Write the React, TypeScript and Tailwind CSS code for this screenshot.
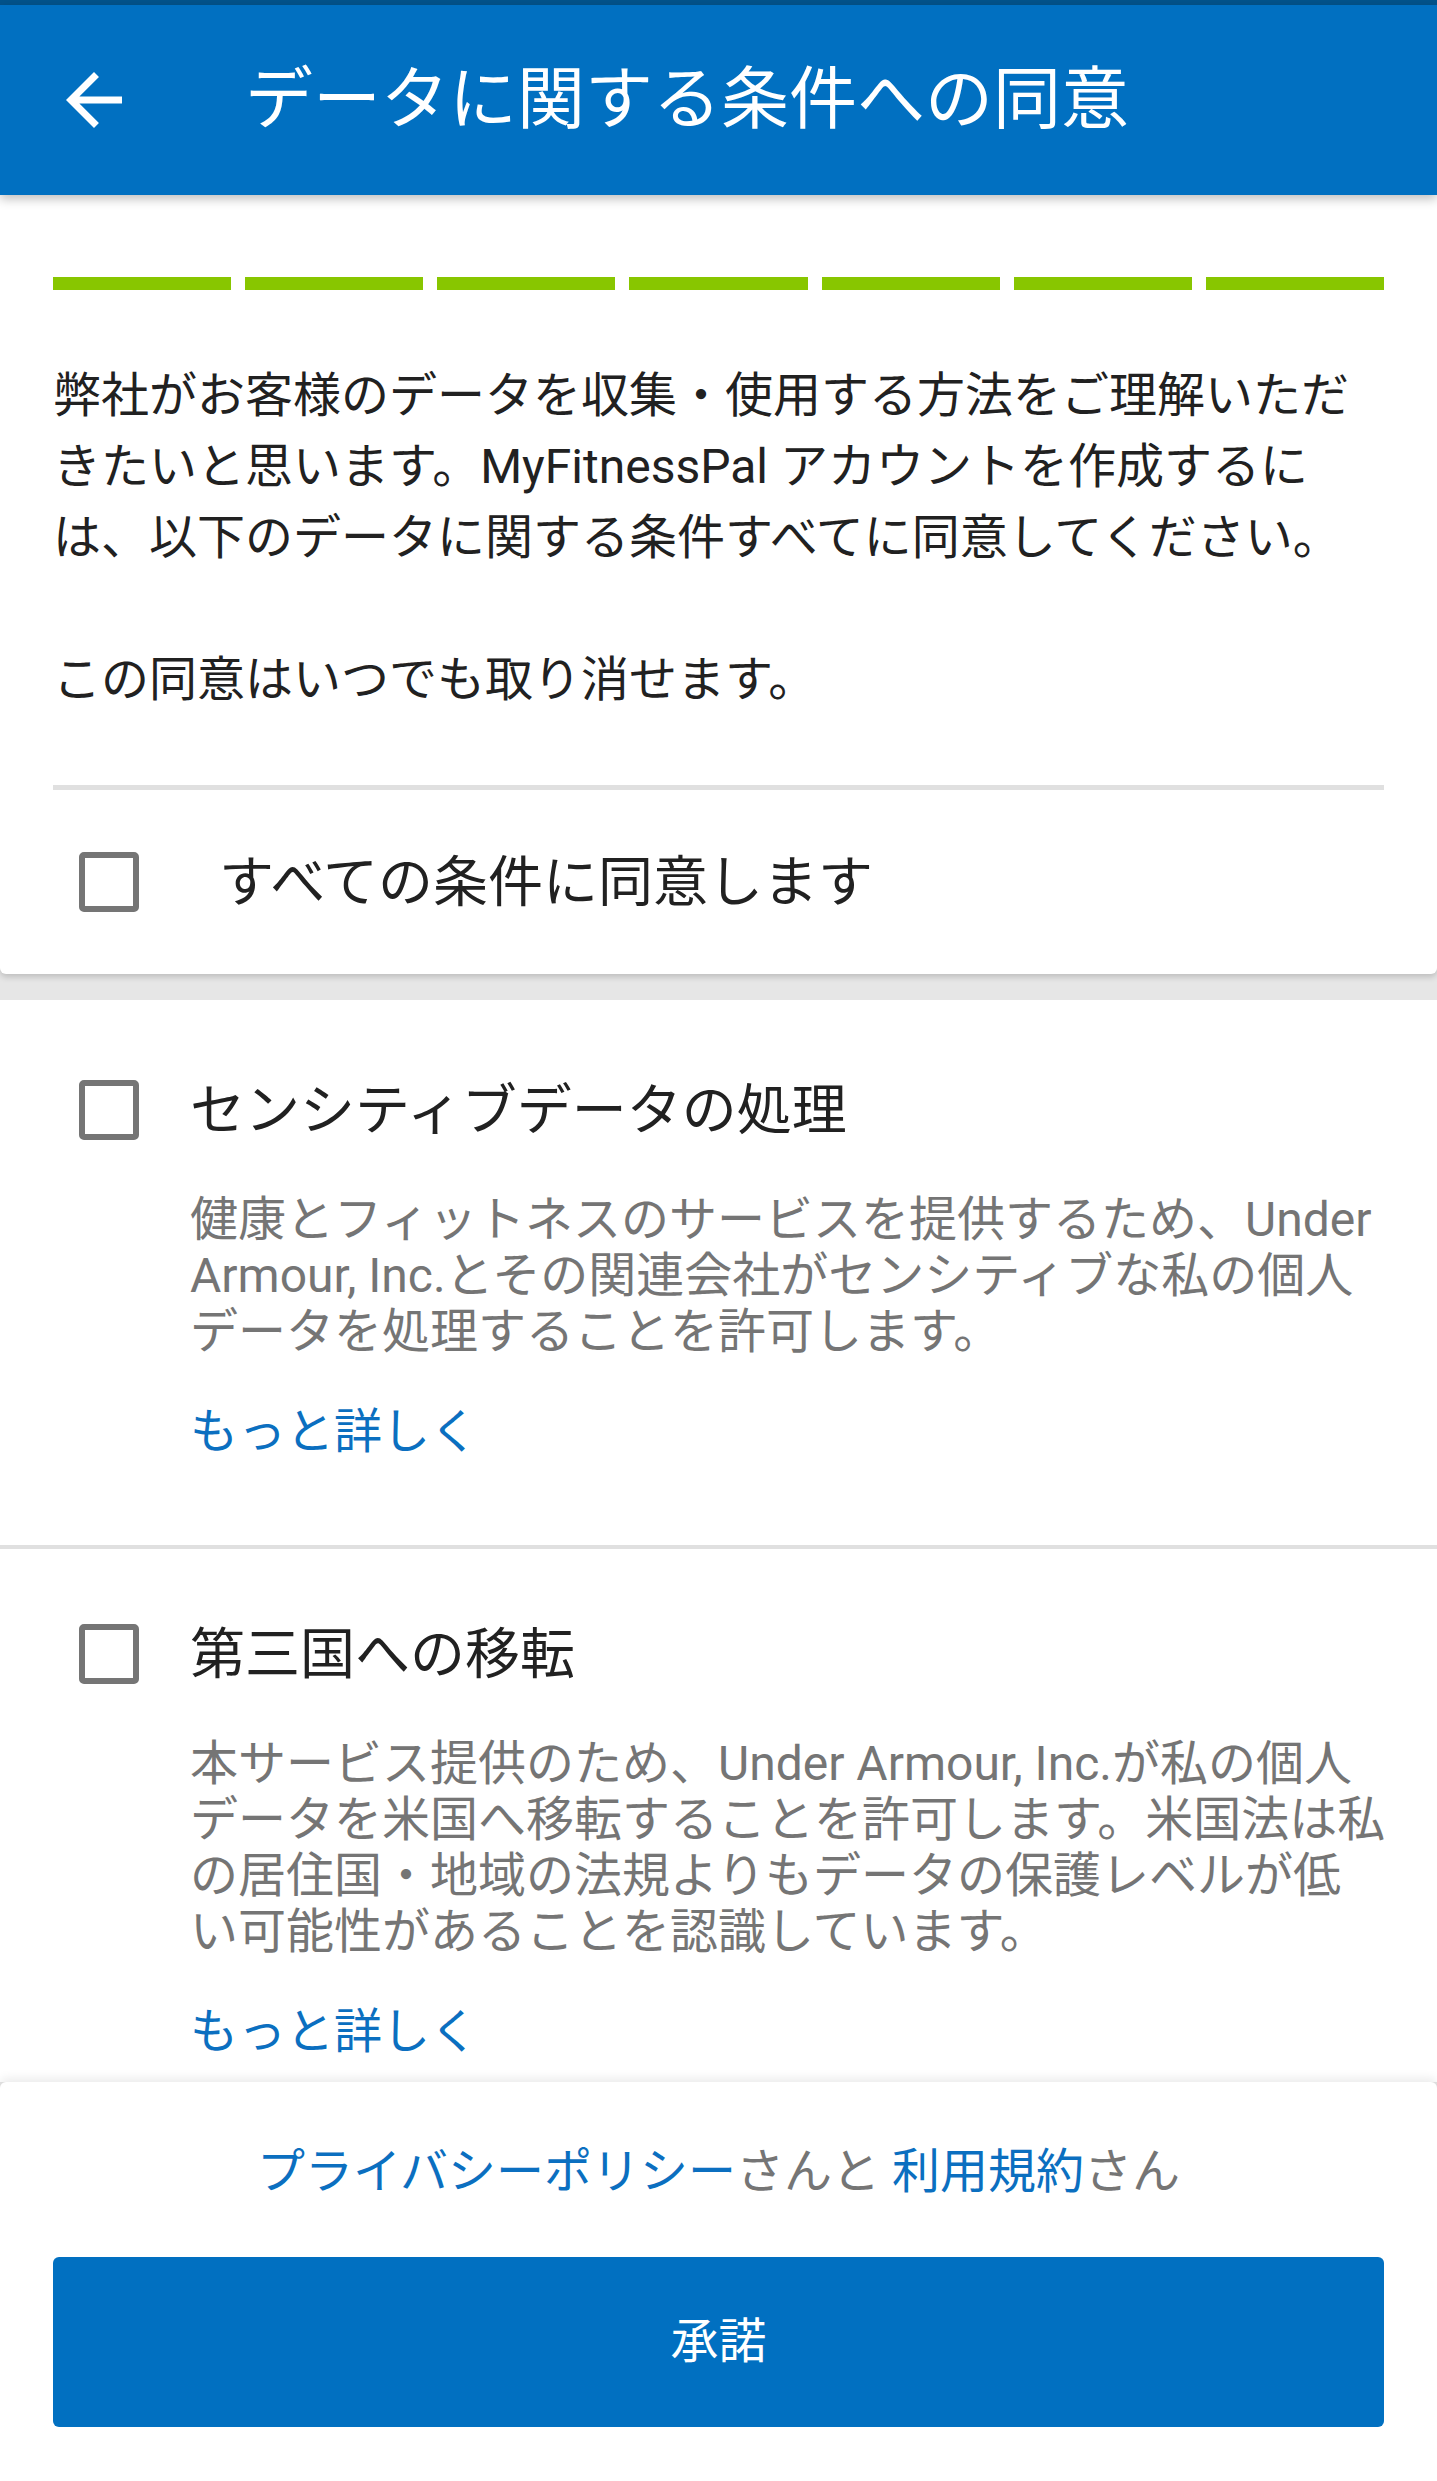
import React from 'react';

const sections = [
  {
    title: 'センシティブデータの処理',
    lines: [
      '健康とフィットネスのサービスを提供するため、Under',
      'Armour, Inc.とその関連会社がセンシティブな私の個人',
      'データを処理することを許可します。',
    ],
    pt: 'pt-[80px]',
    pb: 'pb-[85px]',
  },
  {
    title: '第三国への移転',
    lines: [
      '本サービス提供のため、Under Armour, Inc.が私の個人',
      'データを米国へ移転することを許可します。米国法は私',
      'の居住国・地域の法規よりもデータの保護レベルが低',
      'い可能性があることを認識しています。',
    ],
    pt: 'pt-[75px]',
    pb: 'pb-[85px]',
  },
];

function Checkbox() {
  return <div className="w-[60px] h-[60px] shrink-0 rounded-[5px] border-[6px] border-[#757575] bg-white" />;
}

export default function App() {
  return (
    <div className="w-[1437px] h-[2481px] flex flex-col bg-[#e6e6e6] overflow-hidden font-[Roboto,'Noto_Sans_CJK_JP',sans-serif]">
      <div className="h-[5px] bg-[#03538b] shrink-0" />
      <header className="relative z-20 h-[190px] shrink-0 bg-[#0170c1] flex items-center pl-[52px] shadow-[0_4px_10px_rgba(0,0,0,0.25)]">
        <svg width="84" height="84" viewBox="0 0 24 24" fill="white">
          <path d="M20 11H7.83l5.59-5.59L12 4l-8 8 8 8 1.41-1.41L7.83 13H20v-2z" />
        </svg>
        <h1 className="ml-[109px] text-[68px] leading-[80px] text-white font-normal whitespace-nowrap">データに関する条件への同意</h1>
      </header>

      <div className="relative z-10 shrink-0 bg-white rounded-b-[6px] shadow-[0_3px_6px_rgba(0,0,0,0.18)] px-[53px]">
        <div className="mt-[82px] flex gap-[14px]">
          {Array.from({ length: 7 }).map((_, i) => (
            <div key={i} className="flex-1 h-[13px] bg-[#88c600]" />
          ))}
        </div>
        <p className="mt-[70px] text-[48px] leading-[71px] text-[#212121] whitespace-nowrap">
          弊社がお客様のデータを収集・使用する方法をご理解いただ
          <br />
          きたいと思います。MyFitnessPal アカウントを作成するに
          <br />
          は、以下のデータに関する条件すべてに同意してください。
          <br />
          <br />
          この同意はいつでも取り消せます。
        </p>
        <div className="mt-[70px] h-[5px] bg-[#e0e0e0]" />
        <div className="h-[184px] flex items-center pl-[26px]">
          <Checkbox />
          <span className="ml-[80px] text-[55px] leading-[64px] text-[#212121]">すべての条件に同意します</span>
        </div>
      </div>

      <div className="h-[26px] shrink-0" />

      <div className="flex-1 bg-white overflow-hidden">
        {sections.map((s, i) => (
          <div key={s.title}>
            {i > 0 && <div className="h-[4px] bg-[#e0e0e0]" />}
            <div className={`${s.pt} ${s.pb}`}>
              <div className="flex items-center pl-[79px] h-[60px]">
                <Checkbox />
                <span className="ml-[51px] text-[55px] leading-[60px] text-[#212121]">{s.title}</span>
              </div>
              <div className="pl-[190px] mt-[52px] text-[48px] leading-[56px] text-[#757575] whitespace-nowrap">
                {s.lines.map((l) => (
                  <div key={l}>{l}</div>
                ))}
              </div>
              <div className="pl-[190px] mt-[44px] text-[48px] leading-[56px] text-[#0b6fc0]">もっと詳しく</div>
            </div>
          </div>
        ))}
      </div>

      <footer className="relative z-10 h-[399px] shrink-0 bg-white rounded-t-[6px] shadow-[0_-4px_10px_rgba(0,0,0,0.08)] px-[53px] pt-[62px]">
        <div className="text-center text-[48px] leading-[56px] text-[#757575]">
          <span className="text-[#0b6fc0]">プライバシーポリシー</span>さんと <span className="text-[#0b6fc0]">利用規約</span>さん
        </div>
        <button className="mt-[57px] w-full h-[170px] rounded-[6px] bg-[#0170c1] text-white text-[48px]">承諾</button>
      </footer>
    </div>
  );
}
